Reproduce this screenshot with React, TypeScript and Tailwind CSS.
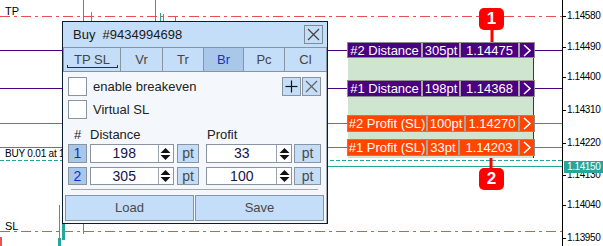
import React from "react";

const axis = [
  { y: 16, t: "1.14580" },
  { y: 47, t: "1.14490" },
  { y: 77, t: "1.14400" },
  { y: 110, t: "1.14310" },
  { y: 143, t: "1.14220" },
  { y: 205, t: "1.14040" },
  { y: 238, t: "1.13950" },
];

function Chevron() {
  return (
    <svg width="10" height="13" viewBox="0 0 10 13">
      <polyline points="2,1 8,6.5 2,12" fill="none" stroke="white" strokeWidth="1.6" />
    </svg>
  );
}

function ChartLabel({
  top,
  h,
  bg,
  segs,
}: {
  top: string;
  h: string;
  bg: string;
  segs: { t: string; w: string }[];
}) {
  return (
    <div className={`absolute left-[347px] ${top} ${h} ${bg} flex border border-[#8c8c8c] text-white text-[13px] leading-none`}>
      {segs.map((s, i) => (
        <div
          key={i}
          className={`${s.w} flex items-center justify-center ${i > 0 ? "border-l-2 border-[#a6a6a6]" : ""}`}
        >
          {s.t}
        </div>
      ))}
      <div className="w-[16px] flex items-center justify-center border-l-2 border-[#a6a6a6]">
        <Chevron />
      </div>
    </div>
  );
}

function Spinner() {
  return (
    <div className="w-[15px] h-full border-l border-[#9aa4ae] flex items-center justify-center bg-white">
      <svg width="11" height="14" viewBox="0 0 11 14">
        <polygon points="5.5,1 10.5,6 0.5,6" fill="#111" />
        <polygon points="0.5,8 10.5,8 5.5,13" fill="#111" />
      </svg>
    </div>
  );
}

function XIcon({ color }: { color: string }) {
  return (
    <svg width="13" height="13" viewBox="0 0 13 13">
      <line x1="1" y1="1" x2="12" y2="12" stroke={color} strokeWidth="1.2" />
      <line x1="12" y1="1" x2="1" y2="12" stroke={color} strokeWidth="1.2" />
    </svg>
  );
}

function PlusIcon() {
  return (
    <svg width="13" height="13" viewBox="0 0 13 13">
      <line x1="6.5" y1="0.5" x2="6.5" y2="12.5" stroke="#111" strokeWidth="1.2" />
      <line x1="0.5" y1="6.5" x2="12.5" y2="6.5" stroke="#111" strokeWidth="1.2" />
    </svg>
  );
}

function Row({ n, d, p, h }: { n: string; d: string; p: string; h: string }) {
  return (
    <div className={`flex ${h}`}>
      <div className="w-[19px] h-full bg-[#a9c7e9] border border-[#8994a0] flex items-center justify-center text-[#1230c8] text-[14px]">
        {n}
      </div>
      <div className="ml-[3px] w-[84px] h-full border border-[#8994a0] bg-white flex">
        <div className="flex-1 flex items-center justify-center text-[#14144a] text-[14px]">{d}</div>
        <Spinner />
      </div>
      <div className="ml-[3px] w-[23px] h-full bg-[#c4ddf8] border border-[#8994a0] flex items-center justify-center text-[#4a4a4a] text-[14px]">
        pt
      </div>
      <div className="ml-[7px] w-[86px] h-full border border-[#8994a0] bg-white flex">
        <div className="flex-1 flex items-center justify-center text-[#14144a] text-[14px]">{p}</div>
        <Spinner />
      </div>
      <div className="ml-[2px] w-[27px] h-full bg-[#c4ddf8] border border-[#8994a0] flex items-center justify-center text-[#4a4a4a] text-[14px]">
        pt
      </div>
    </div>
  );
}

export default function App() {
  const tabs = [
    { t: "TP SL", w: "w-[57px]" },
    { t: "Vr", w: "w-[42px]" },
    { t: "Tr", w: "w-[41px]" },
    { t: "Br", w: "w-[40px]" },
    { t: "Pc", w: "w-[41px]" },
    { t: "Cl", w: "flex-1" },
  ];
  return (
    <div className="relative w-[603px] h-[246px] bg-white overflow-hidden font-['Liberation_Sans',Arial,sans-serif]">
      {/* chart drawing */}
      <svg className="absolute left-0 top-0" width="603" height="246" viewBox="0 0 603 246">
        <line x1="0" y1="16.5" x2="562" y2="16.5" stroke="#e8504f" strokeDasharray="10 4 3 4" />
        <line x1="0" y1="50.5" x2="562" y2="50.5" stroke="#4b0082" />
        <line x1="0" y1="88.5" x2="562" y2="88.5" stroke="#4b0082" />
        <line x1="0" y1="123.5" x2="562" y2="123.5" stroke="#ff4500" />
        <line x1="0" y1="147.5" x2="562" y2="147.5" stroke="#ff4500" />
        <line x1="0" y1="160.5" x2="562" y2="160.5" stroke="#26a69a" strokeDasharray="4 2" />
        <line x1="300" y1="166.5" x2="562" y2="166.5" stroke="#26a69a" />
        <line x1="0" y1="231.5" x2="562" y2="231.5" stroke="#e8504f" strokeDasharray="10 4 3 4" />
        {/* candles */}
        <line x1="83.5" y1="0" x2="83.5" y2="22" stroke="#26a69a" />
        <line x1="91.5" y1="12" x2="91.5" y2="22" stroke="#ef5350" />
        <line x1="155.5" y1="0" x2="155.5" y2="22" stroke="#26a69a" />
        <line x1="160.5" y1="13" x2="160.5" y2="22" stroke="#26a69a" />
        <line x1="163.5" y1="14" x2="163.5" y2="22" stroke="#ef5350" />
        <line x1="175.5" y1="16" x2="175.5" y2="22" stroke="#26a69a" />
        <line x1="59.5" y1="205" x2="59.5" y2="246" stroke="#26a69a" />
        <rect x="58" y="238" width="3" height="8" fill="#26a69a" />
        <rect x="62" y="222" width="3" height="18" fill="#26a69a" />
        <line x1="83.5" y1="222" x2="83.5" y2="234" stroke="#26a69a" />
        <rect x="0" y="237" width="2" height="9" fill="#ef5350" />
        {/* axis */}
        <line x1="562.5" y1="0" x2="562.5" y2="246" stroke="#000" />
        {[16, 47, 77, 110, 143, 175, 205, 238].map((y) => (
          <line key={y} x1="562" y1={y + 0.5} x2="566" y2={y + 0.5} stroke="#000" />
        ))}
        {/* marker stems */}
        <line x1="492" y1="28" x2="492" y2="42" stroke="#ff0000" strokeWidth="3" />
        <line x1="491" y1="155" x2="491" y2="170" stroke="#ff0000" strokeWidth="3" />
      </svg>

      {/* axis labels */}
      {axis.map((a) => (
        <div
          key={a.t}
          className="absolute left-[567px] text-[10px] leading-[12px] tracking-[-0.4px] text-black"
          style={{ top: a.y - 6 }}
        >
          {a.t}
        </div>
      ))}
      {/* partially hidden axis label under current price tag */}
      <div className="absolute left-[567px] top-[173px] h-[6px] w-[36px] overflow-hidden">
        <div className="mt-[-4px] text-[10px] leading-[12px] tracking-[-0.4px] text-black">1.14130</div>
      </div>
      <div className="absolute left-[564px] top-[161px] w-[39px] h-[12px] bg-[#26a69a] text-white text-[10px] leading-[12px] tracking-[-0.4px] pl-[3px]">
        1.14150
      </div>

      {/* chart texts */}
      <div className="absolute left-[5px] top-[5px] text-[11px] leading-[12px] text-black">TP</div>
      <div className="absolute left-[5px] top-[220px] text-[11px] leading-[12px] text-black">SL</div>
      <div className="absolute left-[5px] top-[148px] w-[57px] overflow-hidden text-[10px] leading-[12px] tracking-[-0.2px] text-black whitespace-nowrap">
        BUY 0.01 at 1
      </div>

      {/* green zone */}
      <div className="absolute left-[348px] top-[57px] w-[186px] h-[101px] bg-[#cfe5cf] border-r border-[#3a3a3a]" />

      <ChartLabel
        top="top-[42px]"
        h="h-[16px]"
        bg="bg-[#4b0082]"
        segs={[
          { t: "#2 Distance", w: "w-[73px]" },
          { t: "305pt", w: "w-[38px]" },
          { t: "1.14475", w: "w-[59px]" },
        ]}
      />
      <ChartLabel
        top="top-[80px]"
        h="h-[17px]"
        bg="bg-[#4b0082]"
        segs={[
          { t: "#1 Distance", w: "w-[73px]" },
          { t: "198pt", w: "w-[38px]" },
          { t: "1.14368", w: "w-[59px]" },
        ]}
      />
      <ChartLabel
        top="top-[115px]"
        h="h-[17px]"
        bg="bg-[#ff4500]"
        segs={[
          { t: "#2 Profit (SL)", w: "w-[78px]" },
          { t: "100pt", w: "w-[38px]" },
          { t: "1.14270", w: "w-[54px]" },
        ]}
      />
      <ChartLabel
        top="top-[139px]"
        h="h-[17px]"
        bg="bg-[#ff4500]"
        segs={[
          { t: "#1 Profit (SL)", w: "w-[78px]" },
          { t: "33pt", w: "w-[32px]" },
          { t: "1.14203", w: "w-[60px]" },
        ]}
      />

      {/* markers */}
      <div className="absolute left-[479px] top-[8px] w-[25px] h-[22px] rounded-[5px] bg-[#ff0000] text-white font-bold text-[17px] flex items-center justify-center">
        1
      </div>
      <div className="absolute left-[479px] top-[168px] w-[25px] h-[22px] rounded-[5px] bg-[#ff0000] text-white font-bold text-[17px] flex items-center justify-center">
        2
      </div>

      {/* dialog */}
      <div className="absolute left-[62px] top-[21px] w-[266px] h-[203px] border border-[#0d1b33] bg-[#f4f8fd] flex flex-col">
        <div className="h-[25px] bg-[#c4ddf8] flex items-center justify-between pl-[10px] pr-[4px]">
          <span className="text-[13px] text-[#1a1a1a] whitespace-pre">Buy  #9434994698</span>
          <div className="w-[19px] h-[19px] border border-[#7d8a99] flex items-center justify-center">
            <XIcon color="#444" />
          </div>
        </div>
        <div className="h-[25px] bg-[#c4ddf8] flex border-y border-l border-[#8994a0]">
          {tabs.map((t) => (
            <div
              key={t.t}
              className={`${t.w} relative h-full border-r border-[#8994a0] flex items-center justify-center text-[13px] ${
                t.t === "Br" ? "bg-[#a9c7e9] text-[#1a2ecc]" : "text-[#444]"
              }`}
            >
              {t.t}
              {t.t === "TP SL" && (
                <div className="absolute left-[3px] right-[2px] bottom-[3px] h-[3px] border-x border-b border-[#1a1acc]" />
              )}
            </div>
          ))}
        </div>
        <div className="flex-1 flex flex-col border-r border-[#a4adb7]">
          <div className="px-[5px] flex flex-col">
            <div className="mt-[5px] h-[19px] flex items-center">
              <div className="w-[19px] h-[19px] bg-white border border-[#8994a0]" />
              <span className="ml-[6px] text-[13px] text-[#222]">enable breakeven</span>
              <div className="ml-auto w-[19px] h-[19px] bg-[#c4ddf8] border border-[#8994a0] flex items-center justify-center">
                <PlusIcon />
              </div>
              <div className="ml-[1px] w-[19px] h-[19px] bg-[#c4ddf8] border border-[#8994a0] flex items-center justify-center">
                <XIcon color="#666" />
              </div>
            </div>
            <div className="mt-[4px] h-[19px] flex items-center">
              <div className="w-[19px] h-[19px] bg-white border border-[#8994a0]" />
              <span className="ml-[6px] text-[13px] text-[#222]">Virtual SL</span>
            </div>
            <div className="mt-[7px] h-[17px] flex items-center text-[13px] text-[#222]">
              <span className="w-[22px] pl-[6px]">#</span>
              <span className="w-[117px]">Distance</span>
              <span>Profit</span>
            </div>
            <div className="mt-[1px]">
              <Row n="1" d="198" p="33" h="h-[19px]" />
            </div>
            <div className="mt-[4px]">
              <Row n="2" d="305" p="100" h="h-[18px]" />
            </div>
          </div>
          <div className="mt-[4px] mx-[8px] h-px bg-[#a8a8a8]" />
          <div className="mt-[5px] px-[2px] flex gap-[1px]">
            <div className="flex-1 h-[26px] bg-[#c4ddf8] border border-[#8994a0] flex items-center justify-center text-[13px] text-[#4a4a4a]">
              Load
            </div>
            <div className="flex-1 h-[26px] bg-[#c4ddf8] border border-[#8994a0] flex items-center justify-center text-[13px] text-[#4a4a4a]">
              Save
            </div>
          </div>
        </div>
      </div>
    </div>
  );
}
